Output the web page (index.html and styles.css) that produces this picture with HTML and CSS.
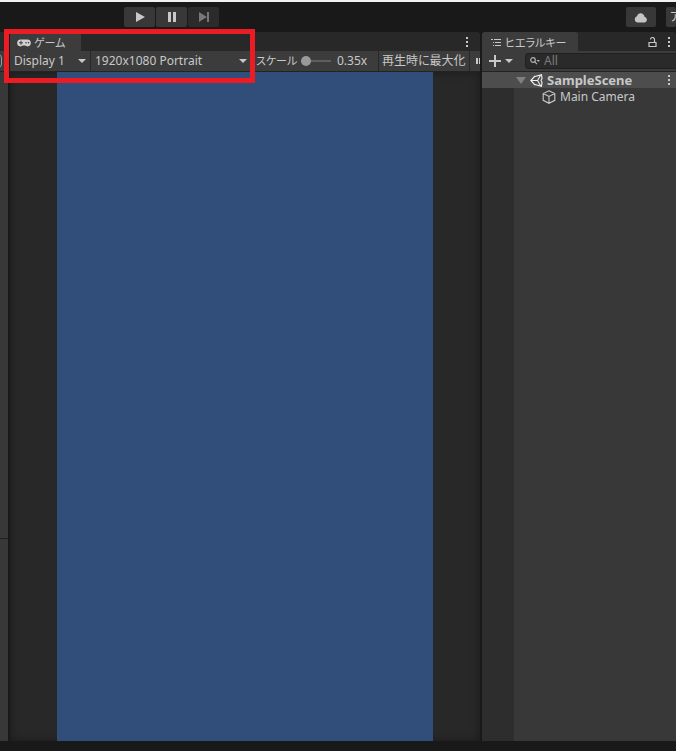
FILE: index.html
```html
<!DOCTYPE html>
<html lang="ja">
<head>
<meta charset="utf-8">
<title>ゲーム</title>
<link rel="stylesheet" href="styles.css">
</head>
<body>
<header class="topbar">
  <div class="playback">
    <button class="tool" aria-label="再生"><svg width="10" height="12" viewBox="0 0 10 12"><path d="M1 1l9 5-9 5z" fill="#c8c8c8"/></svg></button>
    <button class="tool" aria-label="一時停止"><svg width="8" height="10" viewBox="0 0 8 10"><path d="M0 0h3v10H0zM5 0h3v10H5z" fill="#c8c8c8"/></svg></button>
    <button class="tool tool-off" aria-label="ステップ"><svg width="10" height="12" viewBox="0 0 10 12"><path d="M0 1l8 5-8 5zM8 1h2v10H8z" fill="#777"/></svg></button>
  </div>
  <div class="services">
    <button class="tool" aria-label="クラウド"><svg width="14" height="11" viewBox="0 0 14 11"><path d="M3.500 10.500a3.200 3.200 0 0 1-.6-6.200A3.800 3.800 0 0 1 10 3.200c.3.5.4 1 .5 1.500a3 3 0 0 1 .3 5.800z" fill="#c4c4c4"/></svg></button>
    <button class="tool account">ア</button>
  </div>
</header>

<main class="workspace">
  <aside class="sliver">
    <div class="sliver-tabs"></div>
    <div class="sliver-bar"><span class="sliver-pill"></span></div>
    <div class="sliver-top"></div>
    <div class="sliver-bottom"></div>
  </aside>

  <section class="panel game">
    <div class="tabs">
      <button class="tab game-tab"><svg width="14" height="8" viewBox="0 0 14 8"><path d="M3.500 .5h7a3.500 3.500 0 0 1 1 6.800c-1.500.4-2.500-.8-3.500-.8H6c-1 0-2 1.200-3.500.8a3.500 3.500 0 0 1 1-6.800z" fill="#d0d0d0"/><path d="M2 3.800h4M4 1.800v4" stroke="#3c3c3c"/><circle cx="9" cy="3.800" r=".8" fill="#3c3c3c"/><circle cx="11.500" cy="3.800" r=".8" fill="#3c3c3c"/></svg>ゲーム</button>
      <button class="kebab" aria-label="ゲームのメニュー"><svg width="2" height="10" viewBox="0 0 2 10"><path d="M0 0h2v2H0zM0 4h2v2H0zM0 8h2v2H0z" fill="#c8c8c8"/></svg></button>
    </div>
    <div class="bar">
      <div class="dropdown display"><select aria-label="ディスプレイ"><option>Display 1</option></select></div>
      <div class="dropdown aspect"><select aria-label="アスペクト"><option>1920x1080 Portrait</option></select></div>
      <label class="scale-label" for="scale">スケール</label>
      <input class="scale" id="scale" type="range" min="0" max="100" value="0">
      <output class="scale-value" for="scale">0.35x</output>
      <button class="bar-button">再生時に最大化</button>
      <button class="bar-button mute" aria-label="ミュート"><svg width="5" height="6" viewBox="0 0 5 6"><path d="M0 0h2v6H0zM3 0h2v6H3z" fill="#c8c8c8"/></svg></button>
    </div>
    <div class="stage"><div class="camera-view"></div></div>
  </section>

  <section class="panel hierarchy">
    <div class="tabs">
      <button class="tab hierarchy-tab"><svg width="11" height="8" viewBox="0 0 11 8"><path d="M0 0h2v1H0zM3 0h7v1H3zM2 3h1v1H2zM4 3h6v1H4zM2 6h1v1H2zM4 6h6v1H4z" fill="#c8c8c8"/></svg>ヒエラルキー</button>
      <button class="kebab lock" aria-label="ロック"><svg width="9" height="10" viewBox="0 0 9 10"><path d="M1 5.500h7v4H1zM6.500 5V2.500a2 2 0 0 0-4 0" fill="none" stroke="#c8c8c8" stroke-width="1.200"/></svg></button>
      <button class="kebab" aria-label="ヒエラルキーのメニュー"><svg width="2" height="10" viewBox="0 0 2 10"><path d="M0 0h2v2H0zM0 4h2v2H0zM0 8h2v2H0z" fill="#c8c8c8"/></svg></button>
    </div>
    <div class="bar">
      <button class="add" aria-label="追加"><svg width="12" height="12" viewBox="0 0 12 12"><path d="M5 0h2v5h5v2H7v5H5V7H0V5h5z" fill="#c8c8c8"/></svg><svg width="8" height="4" viewBox="0 0 8 4"><path d="M0 0h8L4 4z" fill="#c8c8c8"/></svg></button>
      <label class="search"><svg width="10" height="8" viewBox="0 0 10 8"><circle cx="3" cy="3" r="2.300" fill="none" stroke="#b0b0b0" stroke-width="1.200"/><path d="M4.600 4.600l2.400 2.600" stroke="#b0b0b0" stroke-width="1.200"/><path d="M6.500 3H10L8.200 5z" fill="#b0b0b0"/></svg><input type="search" placeholder="All" aria-label="検索"></label>
    </div>
    <div class="tree">
      <div class="row scene">
        <svg class="fold" width="10" height="7" viewBox="0 0 10 7"><path d="M0 0h10L5 7z" fill="#808080"/></svg>
        <svg width="13" height="13" viewBox="0 0 13 13"><path d="M5 2L.8 6.500 5 11M1 6.500h6.500M7.500 6.500L10.500 1.500M7.500 6.500l3 5M4 2.800l7.500-2 .6 4.200M4 10.200l7.500 2 .6-4.200M12 4.500l-1 2 1 2" fill="none" stroke="#f0f0f0" stroke-width="1.100"/></svg>
        <span class="scene-name">SampleScene</span>
        <button class="kebab" aria-label="シーンのメニュー"><svg width="2" height="10" viewBox="0 0 2 10"><path d="M0 0h2v2H0zM0 4h2v2H0zM0 8h2v2H0z" fill="#c8c8c8"/></svg></button>
      </div>
      <div class="row object">
        <svg width="14" height="14" viewBox="0 0 14 14"><path d="M7 .8l5.800 2.700v6.800L7 13.300l-5.800-3V3.500zM1.200 3.500L7 6.500l5.800-3M7 6.500v6.800" fill="none" stroke="#c8c8c8" stroke-width="1.100"/></svg>
        <span>Main Camera</span>
      </div>
      <div class="children"></div>
    </div>
  </section>
</main>
<div class="callout"></div>
</body>
</html>
```

FILE: styles.css
```css
* {
  box-sizing: border-box;
}

body {
  margin: 0;
  height: 100vh;
  display: flex;
  flex-direction: column;
  overflow: hidden;
  padding-bottom: 10px;
  border-top: 2px solid #f0f3f5;
  background: #191919;
  color: #c8c8c8;
  font: 12px/16px "Noto Sans", "Noto Sans CJK JP", sans-serif;
  font-feature-settings: "palt";
}

button,
input,
select {
  margin: 0;
  padding: 0;
  border: 0;
  background: none;
  color: inherit;
  font: inherit;
  font-feature-settings: inherit;
}

svg {
  flex: none;
  display: block;
}

.topbar {
  flex: none;
  height: 30px;
  display: flex;
  justify-content: space-between;
  align-items: center;
  padding-left: 124px;
}

.playback {
  display: flex;
  gap: 1px;
}

.services {
  display: flex;
  gap: 10px;
  width: 50px;
}

.tool {
  flex: none;
  width: 31px;
  height: 20px;
  display: flex;
  align-items: center;
  justify-content: center;
  border-radius: 2px;
  background: #383838;
}

.tool-off {
  background: #2b2b2b;
}

.services .tool {
  width: 30px;
}

.services .account {
  width: 10px;
  overflow: hidden;
  justify-content: flex-start;
  padding-left: 4px;
}

.workspace {
  flex: 1;
  min-height: 0;
  display: flex;
  gap: 2px;
}

.sliver {
  flex: none;
  width: 8px;
  display: flex;
  flex-direction: column;
}

.sliver-tabs {
  height: 19px;
  background: #282828;
}

.sliver-bar {
  height: 21px;
  background: #3c3c3c;
  border-bottom: 1px solid #232323;
  overflow: hidden;
}

.sliver-pill {
  display: block;
  width: 8px;
  height: 14px;
  margin: 3px 0 0 -6px;
  border: 1px solid #999;
  border-radius: 4px;
}

.sliver-top {
  flex: 467;
  background: #383838;
  border-bottom: 1px solid #202020;
}

.sliver-bottom {
  flex: 202;
  background: #383838;
}

.panel {
  min-width: 0;
  display: flex;
  flex-direction: column;
  overflow: hidden;
}

.game {
  flex: 470;
}

.hierarchy {
  flex: 194;
}

.tabs {
  flex: none;
  height: 19px;
  display: flex;
  align-items: center;
  padding-right: 6px;
  background: #282828;
  border-radius: 3px 3px 0 0;
}

.tab {
  height: 19px;
  display: flex;
  align-items: center;
  gap: 3px;
  padding: 2px 0 0 7px;
  margin-right: auto;
  background: #3c3c3c;
  border-radius: 3px 3px 0 0;
  font-size: 11px;
  white-space: nowrap;
}

.game-tab {
  width: 71px;
}

.hierarchy-tab {
  width: 96px;
  padding-left: 9px;
}

.kebab {
  flex: none;
  width: 14px;
  height: 16px;
  display: flex;
  align-items: center;
  justify-content: center;
}

.lock {
  margin-right: 3px;
}

.hierarchy .tabs {
  padding-right: 0;
}

.bar {
  flex: none;
  height: 21px;
  display: flex;
  align-items: center;
  background: #3c3c3c;
  border-bottom: 1px solid #232323;
  white-space: nowrap;
}

.dropdown {
  flex: none;
  height: 20px;
  display: flex;
  align-items: center;
  padding: 0 4px;
}

.dropdown select {
  flex: 1;
  min-width: 0;
  height: 20px;
  appearance: none;
}

.dropdown::after {
  content: "";
  border: 4px solid transparent;
  border-top-color: #c8c8c8;
  border-bottom: 0;
}

.display {
  width: 81px;
  border-right: 1px solid #282828;
}

.aspect {
  width: 160px;
}

.scale-label {
  width: 40px;
  margin-left: 5px;
  font-size: 11px;
}

.scale {
  flex: none;
  width: 30px;
  height: 16px;
  margin-left: 5px;
  appearance: none;
}

.scale::-webkit-slider-runnable-track {
  height: 2px;
  background: #5e5e5e;
}

.scale::-webkit-slider-thumb {
  appearance: none;
  width: 10px;
  height: 10px;
  margin-top: -4px;
  border-radius: 50%;
  background: #999;
}

.scale-value {
  flex: none;
  width: 41px;
  margin-left: 6px;
}

.bar-button {
  flex: none;
  width: 91px;
  height: 20px;
  padding: 0 3px;
  border-left: 1px solid #282828;
  text-align: left;
}

.bar-button.mute {
  width: 11px;
  padding: 0 0 0 6px;
  overflow: hidden;
}

.stage {
  flex: 1;
  min-height: 0;
  display: flex;
  justify-content: center;
  background: #282828;
  box-shadow: inset 0 0 8px #1a1a1a;
}

.camera-view {
  height: 100%;
  aspect-ratio: 9 / 16;
  background: #314d79;
}

.add {
  flex: none;
  width: 43px;
  display: flex;
  align-items: center;
  gap: 4px;
  padding-left: 7px;
}

.search {
  flex: 1;
  min-width: 0;
  height: 16px;
  display: flex;
  align-items: center;
  gap: 4px;
  padding-left: 4px;
  border: 1px solid #202020;
  border-right: 0;
  border-radius: 4px 0 0 4px;
  background: #2a2a2a;
}

.search input {
  flex: 1;
  min-width: 0;
  height: 14px;
  outline: 0;
}

.search input::placeholder {
  color: #7c7c7c;
}

.tree {
  flex: 1;
  display: flex;
  flex-direction: column;
  background: #2d2d2d;
}

.row {
  flex: none;
  height: 16px;
  display: flex;
  align-items: center;
  white-space: nowrap;
}

.scene {
  gap: 4px;
  padding-left: 34px;
  background: #4d4d4d;
  font-size: 13px;
  font-weight: bold;
}

.scene-name {
  flex: 1;
}

.object {
  height: 18px;
  gap: 4px;
  margin-left: 32px;
  padding-left: 28px;
  background: #383838;
}

.children {
  flex: 1;
  margin-left: 32px;
  background: #383838;
}

.callout {
  position: absolute;
  left: 4px;
  top: 29px;
  width: 251px;
  height: 54px;
  border: 5px solid #ec1c24;
  pointer-events: none;
}
```
